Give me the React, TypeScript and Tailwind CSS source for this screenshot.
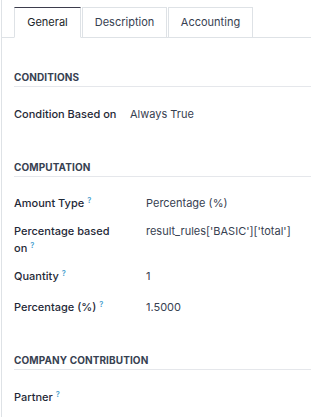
const font = { fontFamily: "Inter, 'Noto Sans', sans-serif" };

function Help() {
  return <sup className="ml-[3px] text-[7.5px] font-semibold leading-none text-[#4a9fcf]">?</sup>;
}

function SectionTitle({ children, className }: { children: string; className: string }) {
  return (
    <div
      className={`border-b border-[#e5e7eb] pb-[3px] text-[10px] font-bold leading-[12px] tracking-[0.01em] text-[#374151] ${className}`}
    >
      {children}
    </div>
  );
}

function Row({ label, value, help, w, className }: { label: string; value?: string; help?: boolean; w: string; className: string }) {
  return (
    <div className={`flex text-[11px] leading-[17px] ${className}`}>
      <div className={`${w} shrink-0 font-medium text-[#1f2937]`}>
        {label}
        {help && <Help />}
      </div>
      <div className="text-[#374151]">{value}</div>
    </div>
  );
}

export default function App() {
  return (
    <div className="h-[417px] w-[311px] overflow-hidden bg-white pl-[1px]" style={font}>
      <div className="h-full border-l border-[#dee2e6]">
        {/* Tabs */}
        <div className="flex border-b border-[#dee2e6] pl-[12px] pt-[7px]">
          <div className="-mb-px flex h-[31px] w-[67px] items-center justify-center border border-[#dee2e6] border-b-white border-t-[#3d3d4d] bg-white text-[11px] text-[#212529]">
            General
          </div>
          <div className="-mb-px ml-[1px] flex h-[31px] w-[85px] items-center justify-center border border-[#dee2e6] text-[11px] text-[#374151]">
            Description
          </div>
          <div className="-mb-px ml-[1px] flex h-[31px] w-[85px] items-center justify-center border border-[#dee2e6] text-[11px] text-[#374151]">
            Accounting
          </div>
        </div>

        <div className="pl-[12px] pt-[33px]">
          <SectionTitle className="">CONDITIONS</SectionTitle>
          <Row className="mt-[19px]" w="w-[116px] pr-[10px]" label="Condition Based on" value="Always True" />

          <SectionTitle className="mt-[38px]">COMPUTATION</SectionTitle>
          <Row className="mt-[18px]" w="w-[132px] pr-[24px]" label="Amount Type" value="Percentage (%)" help />
          <Row
            className="mt-[11px]"
            w="w-[132px] pr-[24px]"
            label="Percentage based on"
            value="result_rules['BASIC']['total']"
            help
          />
          <Row className="mt-[11px]" w="w-[132px] pr-[24px]" label="Quantity" value="1" help />
          <Row className="mt-[14px]" w="w-[132px] pr-[24px]" label="Percentage (%)" value="1.5000" help />

          <SectionTitle className="mt-[38px]">COMPANY CONTRIBUTION</SectionTitle>
          <Row className="mt-[19px]" w="w-[132px] pr-[24px]" label="Partner" help />
        </div>
      </div>
    </div>
  );
}
